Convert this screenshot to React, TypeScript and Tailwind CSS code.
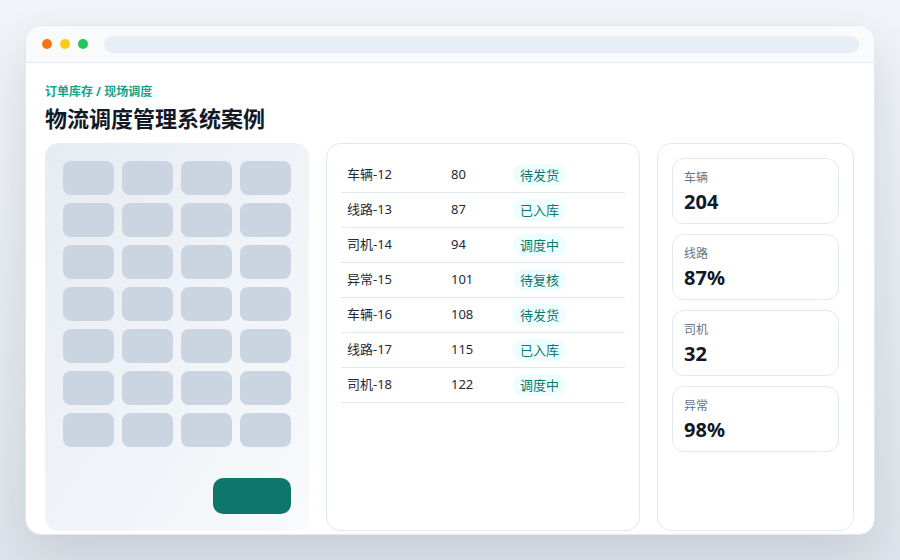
import React from 'react';

const rows = [
  { name: '车辆-12', qty: 80, status: '待发货' },
  { name: '线路-13', qty: 87, status: '已入库' },
  { name: '司机-14', qty: 94, status: '调度中' },
  { name: '异常-15', qty: 101, status: '待复核' },
  { name: '车辆-16', qty: 108, status: '待发货' },
  { name: '线路-17', qty: 115, status: '已入库' },
  { name: '司机-18', qty: 122, status: '调度中' },
];

const stats = [
  { label: '车辆', value: '204' },
  { label: '线路', value: '87%' },
  { label: '司机', value: '32' },
  { label: '异常', value: '98%' },
];

export default function App() {
  return (
    <div
      className="h-[560px] w-[900px] overflow-hidden bg-gradient-to-b from-[#f1f4f8] to-[#dfe5ec] pt-[25px] pl-[25px]"
      style={{ fontFamily: '"Noto Sans", "Noto Sans CJK SC", sans-serif' }}
    >
      <div className="flex h-[510px] w-[850px] flex-col overflow-hidden rounded-2xl border border-[#e2e8f0] bg-white shadow-[0_20px_50px_rgba(15,23,42,0.12)]">
        {/* 窗口顶栏 */}
        <div className="flex h-[37px] shrink-0 items-center gap-4 border-b border-[#e2e8f0] bg-[#f8fafc] pl-[16px] pr-[15px]">
          <div className="flex items-center gap-2">
            <span className="h-[10px] w-[10px] rounded-full bg-[#f97316]" />
            <span className="h-[10px] w-[10px] rounded-full bg-[#facc15]" />
            <span className="h-[10px] w-[10px] rounded-full bg-[#22c55e]" />
          </div>
          <div className="h-[17px] flex-1 rounded-full bg-[#e8eef6]" />
        </div>

        <div className="flex flex-1 flex-col pl-[19px] pr-[20px] pt-[20px] pb-[3px]">
          <div className="text-[12px] font-bold leading-[18px] text-[#14a38b]">订单库存 / 现场调度</div>
          <h1 className="mt-[2px] text-[22px] font-bold leading-[30px] text-[#111827]">物流调度管理系统案例</h1>

          <div className="mt-[10px] grid flex-1 grid-cols-[264px_1fr_197px] gap-[17px]">
            {/* 仓位格 */}
            <div className="flex flex-col rounded-[14px] bg-gradient-to-br from-[#e7ecf2] to-[#f8fafc] px-[18px] pt-[18px] pb-[17px]">
              <div className="grid grid-cols-4 gap-[8px]">
                {Array.from({ length: 28 }).map((_, i) => (
                  <div key={i} className="h-[34px] rounded-[8px] bg-[#cbd5e1]" />
                ))}
              </div>
              <div className="mt-auto flex justify-end">
                <button className="h-[36px] w-[78px] rounded-[10px] bg-[#0f766e]" />
              </div>
            </div>

            {/* 列表 */}
            <div className="rounded-[14px] border border-[#e2e8f0] bg-white px-[14px] pt-[14px]">
              {rows.map((r) => (
                <div
                  key={r.name}
                  className="flex h-[35px] items-center border-b border-[#e2e8f0] pl-[6px] text-[13px] text-[#1f2937]"
                >
                  <span className="w-[104px]">{r.name}</span>
                  <span className="w-[62px]">{r.qty}</span>
                  <span className="rounded-full bg-[#ecfeff] px-[7px] py-[2px] text-[13px] leading-[18px] text-[#0f766e]">
                    {r.status}
                  </span>
                </div>
              ))}
            </div>

            {/* 统计 */}
            <div className="flex flex-col gap-[10px] rounded-[14px] border border-[#e2e8f0] bg-white px-[14px] pt-[14px]">
              {stats.map((s) => (
                <div key={s.label} className="h-[66px] rounded-[12px] border border-[#e2e8f0] px-[11px] pt-[11px]">
                  <div className="text-[12px] leading-[16px] text-[#64748b]">{s.label}</div>
                  <div className="mt-[2px] text-[20px] font-bold leading-[28px] text-[#111827]">{s.value}</div>
                </div>
              ))}
            </div>
          </div>
        </div>
      </div>
    </div>
  );
}
